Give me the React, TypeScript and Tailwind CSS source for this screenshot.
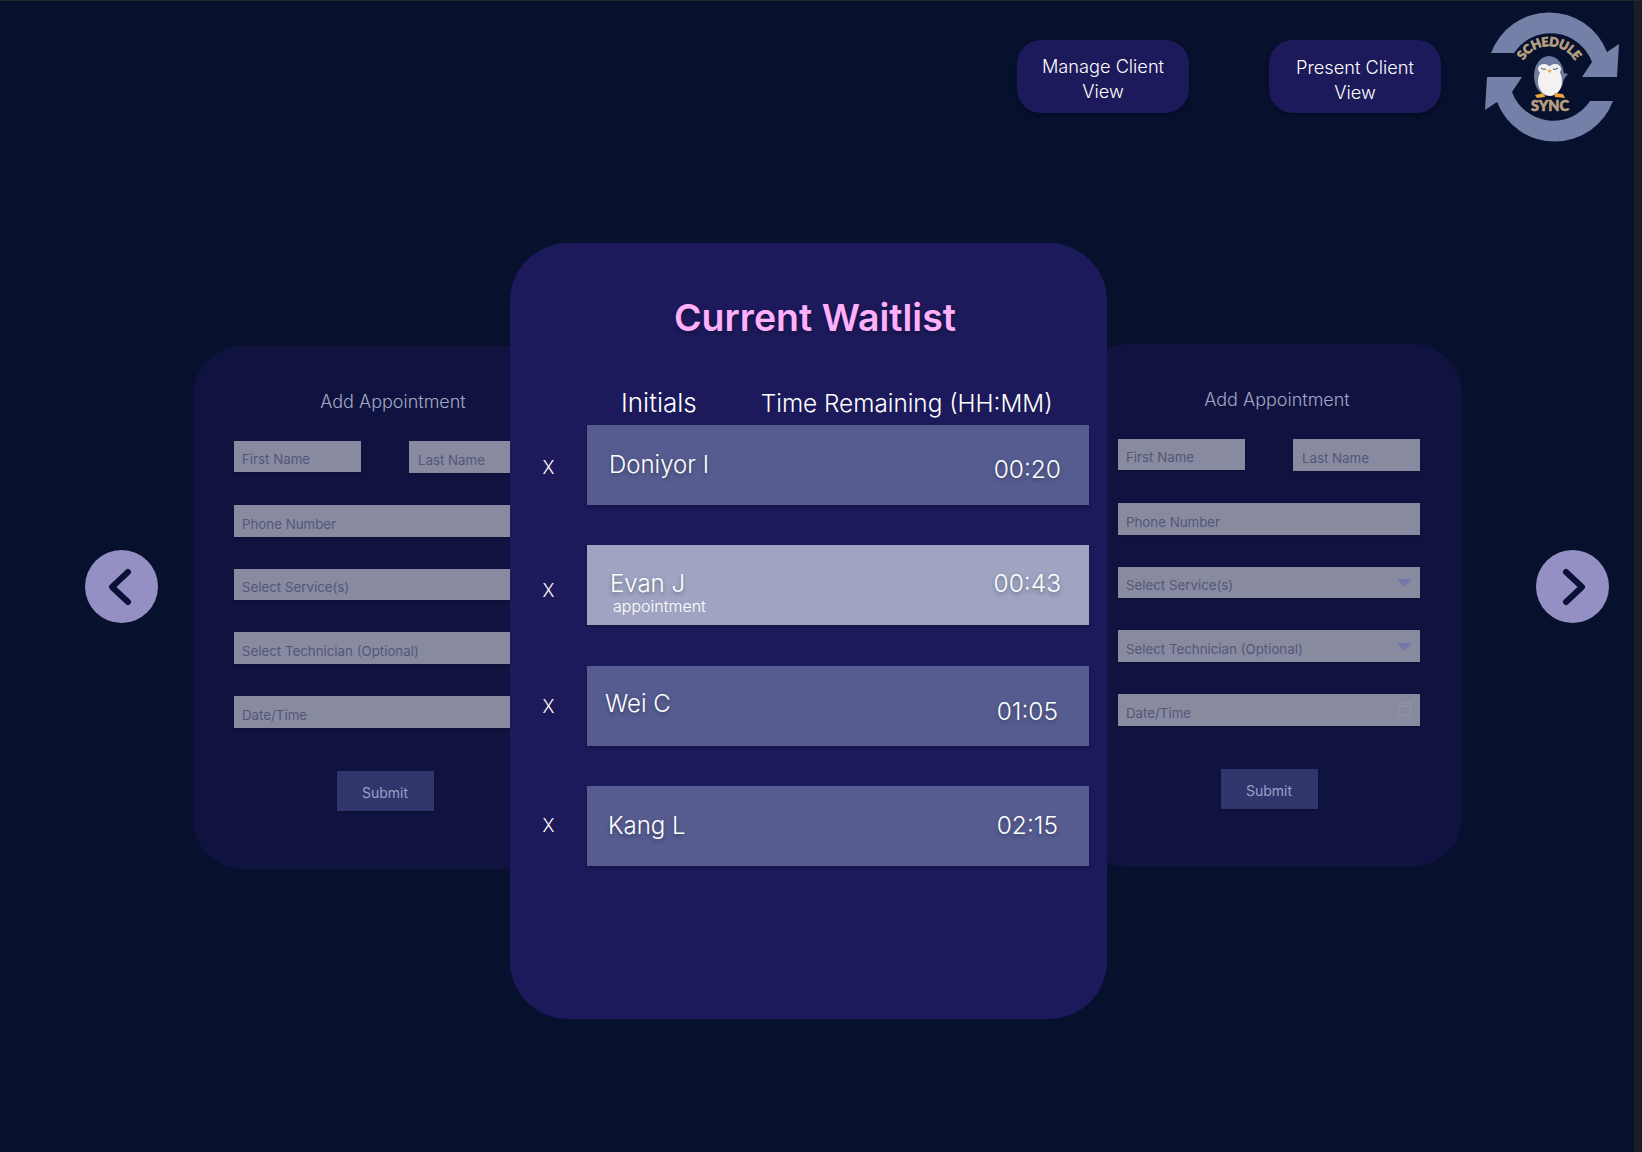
import React from 'react';

const waitlist = [
  { x: 'pt-[29px]', name: 'Doniyor I', nameClass: 'pl-[22px] pt-[23px]', time: '00:20', timeClass: 'pr-[28px] pt-[27px]', bg: 'bg-[#565c90]' },
  { x: 'pt-[32px]', name: 'Evan J', nameClass: 'pl-[23px] pt-[22px]', time: '00:43', timeClass: 'pr-[28px] pt-[21px]', bg: 'bg-[#9ea4c1]', note: 'appointment' },
  { x: 'pt-[27px]', name: 'Wei C', nameClass: 'pl-[18px] pt-[21px]', time: '01:05', timeClass: 'pr-[31px] pt-[28px]', bg: 'bg-[#565c90]' },
  { x: 'pt-[26px]', name: 'Kang L', nameClass: 'pl-[21px] pt-[23px]', time: '02:15', timeClass: 'pr-[31px] pt-[22px]', bg: 'bg-[#565c90]' },
];

const arrowPath = 'M10 41 A62 62 0 0 1 126 40 L138 32 L136 65 L101 65 L111 50 A44 44 0 0 0 33 41 Z';

const Logo = () => (
  <svg viewBox="0 0 140 130" className="h-[130px] w-[140px]">
    <path d={arrowPath} fill="#7480a8" />
    <path d={arrowPath} fill="#7480a8" transform="rotate(180 71 65)" />
    <defs>
      <path id="logo-arc" d="M41 51 A30 30 0 0 1 95 51" />
    </defs>
    <text fontFamily="Lato, sans-serif" fontWeight="900" fontSize="12.5" letterSpacing="-0.4" fill="#b8a081" stroke="#b8a081" strokeWidth="0.7" strokeLinejoin="round">
      <textPath href="#logo-arc" startOffset="50%" textAnchor="middle">SCHEDULE</textPath>
    </text>
    {/* penguin */}
    <path d="M78 60 L87 62 L79 72 Z" fill="#6d7aa0" />
    <ellipse cx="68" cy="64" rx="15" ry="20" fill="#6d7aa0" />
    <ellipse cx="69" cy="69" rx="12" ry="15" fill="#f4f2f0" />
    <ellipse cx="63" cy="57" rx="6" ry="5" fill="#f4f2f0" />
    <ellipse cx="74" cy="57" rx="6" ry="5" fill="#f4f2f0" />
    <path d="M60 56 q2 2 5 1 M72 57 q3 1 5 -1" stroke="#333a55" strokeWidth="0.9" fill="none" />
    <path d="M66 58 h5 l-2.5 3 Z" fill="#eda63e" />
    <path d="M54 83 l9 -2 l1 4 l-8 1 Z M73 81 l9 1 l2 4 l-10 -1 Z" fill="#eda63e" />
    <text x="69" y="99" textAnchor="middle" fontFamily="Lato, sans-serif" fontWeight="900" fontSize="14.5" fill="#b8a081" stroke="#b8a081" strokeWidth="0.6" strokeLinejoin="round">SYNC</text>
  </svg>
);

const Field: React.FC<{ label: string; className?: string; children?: React.ReactNode }> = ({ label, className, children }) => (
  <div className={`flex items-end justify-between bg-[#888b9f] pb-[3px] text-[13.3px] leading-[20px] font-normal text-[#53567a] shadow-[0_1px_2px_rgba(0,0,0,0.25)] ${className}`}>
    <span>{label}</span>
    {children}
  </div>
);

const Caret = () => (
  <svg viewBox="0 0 15 8" className="mr-[8px] mb-[8px] h-[8px] w-[15px]">
    <path d="M0 0 H15 L7.5 8 Z" fill="#7177a8" />
  </svg>
);

const AppointmentCard: React.FC<{ className: string; controls?: boolean }> = ({ className, controls }) => (
  <div className={`h-[523px] w-[385px] shrink-0 rounded-[50px] bg-[#10133f] pt-[44px] pr-[42px] pl-[41px] ${className}`}>
    <h2 className="pl-[16px] text-center text-[18px] leading-[24px] font-light text-[#a4a7c4]">Add Appointment</h2>
    <div className="mt-[27px] flex flex-col gap-[32px]">
      <div className="flex items-start justify-between">
        <Field label="First Name" className="h-[31px] w-[127px] pl-[8px]" />
        <Field label="Last Name" className="h-[32px] w-[127px] pl-[9px]" />
      </div>
      <Field label="Phone Number" className="h-[32px] pl-[8px]" />
      <Field label="Select Service(s)" className="h-[31px] pl-[8px]">{controls && <Caret />}</Field>
      <Field label="Select Technician (Optional)" className="h-[32px] pl-[8px]">{controls && <Caret />}</Field>
      <Field label="Date/Time" className="h-[32px] pl-[8px]">
        {controls && (
          <svg viewBox="0 0 15 14" className="mr-[8px] mb-[7px] h-[14px] w-[15px]" fill="none" stroke="#9396aa" strokeWidth="1">
            <path d="M2 1 H14 L13 13 H1 Z M2 4 H14" />
          </svg>
        )}
      </Field>
    </div>
    <button className="mx-auto mt-[43px] block h-[40px] w-[97px] bg-[#30366b] pt-[3px] text-[14px] text-[#9a9ec8] shadow-[0_1px_2px_rgba(0,0,0,0.25)]">Submit</button>
  </div>
);

const Arrow: React.FC<{ className: string; d: string }> = ({ className, d }) => (
  <button className={`flex h-[73px] w-[73px] shrink-0 items-center justify-center rounded-full bg-[#9590c4] ${className}`}>
    <svg viewBox="0 0 73 73" className="h-[73px] w-[73px]" fill="none" stroke="#0b1035" strokeWidth="6" strokeLinecap="round" strokeLinejoin="round">
      <path d={d} />
    </svg>
  </button>
);

export default function App() {
  return (
    <div className="flex h-[1152px] w-full border-t border-[#24272d] bg-[#1b1e25] font-['Inter',sans-serif]">
      <div className="h-full w-[1634px] shrink-0 bg-[#07102d]">
        <header className="flex h-[242px] items-start justify-end pr-[13px]">
          <button className="mt-[39px] h-[73px] w-[172px] rounded-[24px] bg-[#1c1a5a] pt-[4px] text-[18.2px] leading-[25px] font-light text-white shadow-[0_2px_4px_rgba(0,0,0,0.25)]">
            Manage Client<br />View
          </button>
          <button className="mt-[39px] ml-[80px] h-[73px] w-[172px] rounded-[24px] bg-[#1c1a5a] pt-[6px] text-[18.2px] leading-[25px] font-light text-white shadow-[0_2px_4px_rgba(0,0,0,0.25)]">
            Present Client<br />View
          </button>
          <div className="mt-[11px] ml-[40px]"><Logo /></div>
        </header>

        <main className="flex items-start pl-[85px]">
          <Arrow className="mt-[307px]" d="M43 22 L27 37 L43 52" />
          <AppointmentCard className="mt-[103px] ml-[35px]" />

          <section className="relative z-10 -ml-[68px] h-[776px] w-[597px] shrink-0 rounded-[58px] bg-[#1c1a5a] pt-[52px] pr-[18px]">
            <h1 className="pl-[31px] text-center text-[37.5px] leading-[46px] font-semibold text-[#ffb0fb] [text-shadow:0_2px_4px_rgba(0,0,0,0.3)]">Current Waitlist</h1>
            <div className="mt-[45px] flex items-baseline pl-[111px] leading-[34px] font-light text-white">
              <span className="text-[26px]">Initials</span>
              <span className="ml-[64px] text-[24.3px]">Time Remaining (HH:MM)</span>
            </div>
            <div className="mt-[5px] flex flex-col gap-[40.4px]">
              {waitlist.map(row => (
                <div key={row.name} className="flex">
                  <button className={`w-[77px] shrink-0 self-start text-center text-[18px] leading-[28px] font-light text-white ${row.x}`}>X</button>
                  <div className={`flex h-[80px] flex-1 items-start justify-between text-[24px] leading-[34px] font-light text-white shadow-[0_2px_3px_rgba(0,0,0,0.25)] [text-shadow:0_2px_4px_rgba(0,0,0,0.35)] ${row.bg}`}>
                    <div className={row.nameClass}>
                      {row.name}
                      {row.note && <div className="-mt-[5px] ml-[3px] text-[16px] leading-[20px] [text-shadow:none]">{row.note}</div>}
                    </div>
                    <span className={`text-[24.5px] ${row.timeClass}`}>{row.time}</span>
                  </div>
                </div>
              ))}
            </div>
          </section>

          <AppointmentCard className="mt-[101px] -ml-[30px]" controls />
          <Arrow className="mt-[307px] ml-[74px]" d="M30 22 L46 37 L30 52" />
        </main>
      </div>
    </div>
  );
}
